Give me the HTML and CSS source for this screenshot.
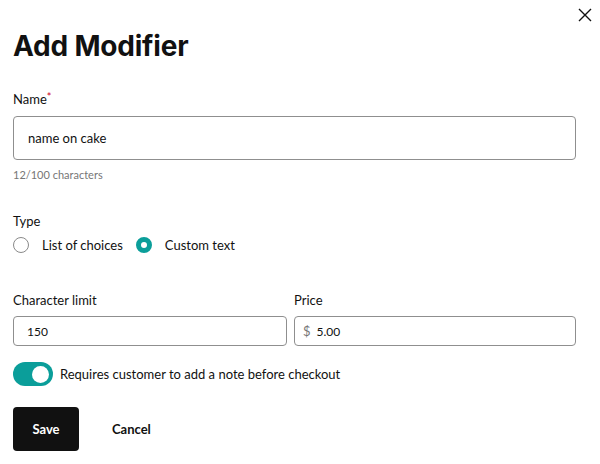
FILE: index.html
```html
<!DOCTYPE html>
<html lang="en">
<head>
<meta charset="utf-8">
<title>Add Modifier</title>
<link rel="stylesheet" href="styles.css">
</head>
<body>
<div class="modal">
  <button class="close" aria-label="Close">
    <svg width="14" height="14" viewBox="0 0 14 14"><path d="M1 1 L13 13 M13 1 L1 13" stroke="#111" stroke-width="1.4" fill="none"/></svg>
  </button>
  <h1 class="title">Add Modifier</h1>

  <label class="label label-name">Name<span class="req">*</span></label>
  <div class="input input-lg">name on cake</div>
  <div class="helper">12/100 characters</div>

  <div class="label label-type">Type</div>
  <div class="radios">
    <span class="radio"></span><span class="radio-text">List of choices</span>
    <span class="radio radio-on"></span><span class="radio-text">Custom text</span>
  </div>

  <div class="cols">
    <div class="col">
      <div class="label">Character limit</div>
      <div class="input input-sm">150</div>
    </div>
    <div class="col">
      <div class="label">Price</div>
      <div class="input input-sm"><span class="currency">$</span>5.00</div>
    </div>
  </div>

  <div class="toggle-row">
    <span class="toggle"><span class="knob"></span></span>
    <span class="toggle-text">Requires customer to add a note before checkout</span>
  </div>

  <div class="actions">
    <button class="btn-save">Save</button>
    <button class="btn-cancel">Cancel</button>
  </div>
</div>
</body>
</html>
```

FILE: styles.css
```css
* { box-sizing: border-box; }
html, body { margin: 0; padding: 0; background: #fff; }
body {
  font-family: Lato, Inter, "Liberation Sans", sans-serif;
  color: #111;
}
.modal {
  position: relative;
  width: 600px;
  height: 464px;
  padding: 0 24px 0 13px;
  overflow: hidden;
}
.close {
  position: absolute;
  top: 8px;
  right: 8px;
  width: 14px;
  height: 14px;
  padding: 0;
  border: 0;
  background: none;
  display: flex;
}
.title {
  margin: 29px 0 0;
  font-family: Inter, "Liberation Sans", sans-serif;
  font-size: 28px;
  line-height: 34px;
  font-weight: 700;
  letter-spacing: -0.2px;
}
.label {
  display: block;
  font-size: 13px;
  line-height: 18px;
  font-weight: 400;
  color: #111;
}
.label-name { margin-top: 27px; }
.req { color: #d0021b; font-size: 11px; vertical-align: top; line-height: 14px; }
.input {
  border: 1px solid #8f8f8f;
  border-radius: 4px;
  display: flex;
  align-items: center;
  font-size: 13px;
  color: #111;
}
.input-lg {
  margin-top: 8px;
  height: 44px;
  padding-left: 14px;
}
.helper {
  margin-top: 8px;
  font-size: 11px;
  line-height: 14px;
  color: #767676;
}
.label-type { margin-top: 30px; }
.radios {
  margin-top: 5px;
  height: 20px;
  display: flex;
  align-items: center;
}
.radio {
  width: 16px;
  height: 16px;
  border-radius: 50%;
  border: 1.5px solid #8a8a8a;
  flex: none;
}
.radio-on {
  border: 5px solid #0b9e9a;
  background: #fff;
}
.radio-text {
  font-size: 13px;
  font-weight: 400;
  margin-left: 13px;
  margin-right: 13px;
}
.cols {
  margin-top: 36px;
  display: grid;
  grid-template-columns: 274px 1fr;
  column-gap: 7px;
}
.input-sm {
  margin-top: 7px;
  height: 30px;
  padding-left: 13px;
  font-size: 12px;
}
.currency {
  color: #777;
  font-size: 13px;
  margin-left: -5px;
  margin-right: 6px;
}
.toggle-row {
  margin-top: 16px;
  display: flex;
  align-items: center;
  height: 24px;
}
.toggle {
  width: 40px;
  height: 24px;
  border-radius: 12px;
  background: #0b9e9a;
  display: flex;
  align-items: center;
  justify-content: flex-end;
  padding-right: 4px;
  flex: none;
}
.knob {
  width: 17px;
  height: 17px;
  border-radius: 50%;
  background: #fff;
}
.toggle-text {
  margin-left: 7px;
  font-size: 13px;
  font-weight: 400;
}
.actions {
  margin-top: 21px;
  display: flex;
  align-items: center;
}
.btn-save {
  width: 66px;
  height: 44px;
  border: 0;
  border-radius: 4px;
  background: #111;
  color: #fff;
  font-family: inherit;
  font-size: 13px;
  font-weight: 700;
}
.btn-cancel {
  margin-left: 33px;
  border: 0;
  background: none;
  padding: 0;
  color: #111;
  font-family: inherit;
  font-size: 13px;
  font-weight: 700;
}
```
